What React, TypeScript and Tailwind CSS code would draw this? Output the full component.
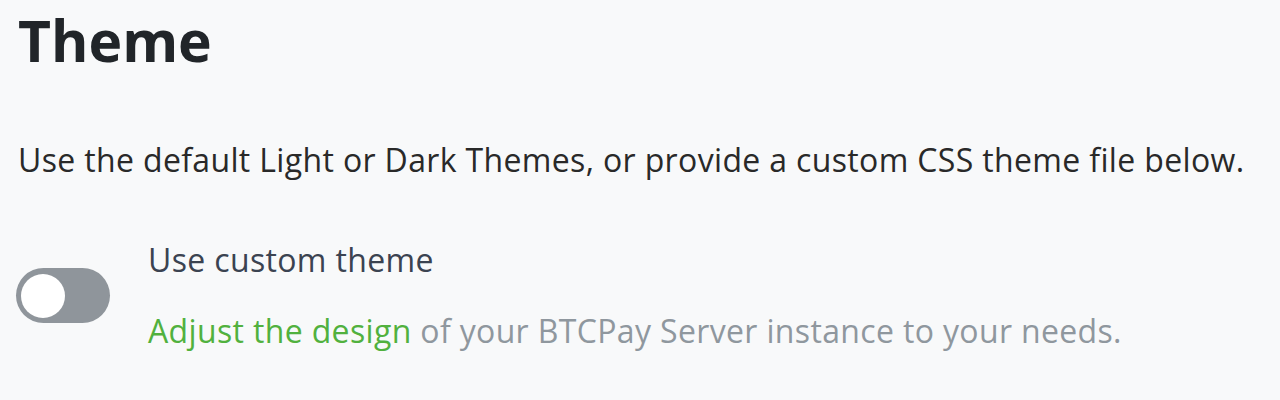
export default function App() {
  return (
    <div className="h-[400px] w-[1280px] overflow-hidden bg-[#f8f9fa] font-['Open_Sans',sans-serif]">
      <div className="pl-[18px] pt-[2px]">
        <h2 className="text-[57px] font-bold leading-[76px] text-[#212529]">Theme</h2>
        <p className="mt-[62px] text-[32px] leading-[40px] tracking-[0.35px] text-[#292929]">
          Use the default Light or Dark Themes, or provide a custom CSS theme file below.
        </p>
        <div className="mt-[60px] flex items-start">
          <div className="ml-[-2px] mt-[28px] flex h-[55px] w-[94px] shrink-0 items-center rounded-full bg-[#8f959b] px-[5px]">
            <div className="h-[44px] w-[44px] rounded-full bg-white" />
          </div>
          <div className="ml-[38px]">
            <div className="text-[32px] leading-[40px] tracking-[0.35px] text-[#3b4351]">Use custom theme</div>
            <div className="mt-[31px] text-[32px] leading-[40px] tracking-[0.35px] text-[#8f979e]">
              <a className="text-[#51b13e]">Adjust the design</a> of your BTCPay Server instance to your needs.
            </div>
          </div>
        </div>
      </div>
    </div>
  );
}
